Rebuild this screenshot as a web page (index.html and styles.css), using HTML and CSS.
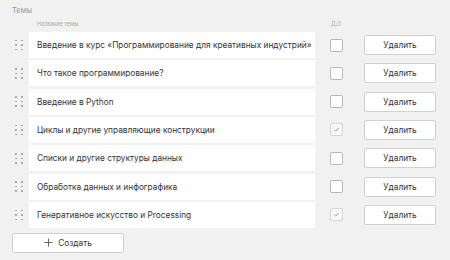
FILE: index.html
```html
<!DOCTYPE html>
<html lang="ru">
<head>
  <meta charset="UTF-8" />
  <title>Темы</title>
  <link rel="stylesheet" href="styles.css">
</head>
<body>
  <div class="topics">
    <div class="section-title">Темы</div>
    <div class="head">
      <span class="head-name">Название темы</span>
      <span class="head-hw">Д/З</span>
    </div>

    <div class="list">
      <div class="row">
        <span class="handle"><i></i><i></i><i></i><i></i><i></i><i></i></span>
        <div class="card">Введение в курс «Программирование для креативных индустрий»</div>
        <div class="hw"><span class="check"></span></div>
        <button class="btn-del">Удалить</button>
      </div>
      <div class="row">
        <span class="handle"><i></i><i></i><i></i><i></i><i></i><i></i></span>
        <div class="card">Что такое программирование?</div>
        <div class="hw"><span class="check"></span></div>
        <button class="btn-del">Удалить</button>
      </div>
      <div class="row">
        <span class="handle"><i></i><i></i><i></i><i></i><i></i><i></i></span>
        <div class="card">Введение в Python</div>
        <div class="hw"><span class="check"></span></div>
        <button class="btn-del">Удалить</button>
      </div>
      <div class="row">
        <span class="handle"><i></i><i></i><i></i><i></i><i></i><i></i></span>
        <div class="card">Циклы и другие управляющие конструкции</div>
        <div class="hw"><span class="check checked"><svg viewBox="0 0 8 8" width="7" height="7"><path d="M1.5 4.3 L3.2 5.8 L6.5 2.2" fill="none" stroke="#9a9a9a" stroke-width="1.1"/></svg></span></div>
        <button class="btn-del">Удалить</button>
      </div>
      <div class="row">
        <span class="handle"><i></i><i></i><i></i><i></i><i></i><i></i></span>
        <div class="card">Списки и другие структуры данных</div>
        <div class="hw"><span class="check"></span></div>
        <button class="btn-del">Удалить</button>
      </div>
      <div class="row">
        <span class="handle"><i></i><i></i><i></i><i></i><i></i><i></i></span>
        <div class="card">Обработка данных и инфографика</div>
        <div class="hw"><span class="check"></span></div>
        <button class="btn-del">Удалить</button>
      </div>
      <div class="row">
        <span class="handle"><i></i><i></i><i></i><i></i><i></i><i></i></span>
        <div class="card">Генеративное искусство и Processing</div>
        <div class="hw"><span class="check checked"><svg viewBox="0 0 8 8" width="7" height="7"><path d="M1.5 4.3 L3.2 5.8 L6.5 2.2" fill="none" stroke="#9a9a9a" stroke-width="1.1"/></svg></span></div>
        <button class="btn-del">Удалить</button>
      </div>
    </div>

    <button class="btn-add"><svg viewBox="0 0 10 10" width="9" height="9"><path d="M5 0.5 V9.5 M0.5 5 H9.5" stroke="#555" stroke-width="1"/></svg>Создать</button>
  </div>
</body>
</html>
```

FILE: styles.css
```css
html, body {
  margin: 0;
  background: #f1f1f1;
}
body {
  font-family: Inter, "Noto Sans", sans-serif;
  color: #333;
}
.topics {
  padding: 5px 0 0 12px;
}
.section-title {
  font-size: 7.5px;
  color: #9a9a9a;
  height: 12px;
  line-height: 12px;
}
.head {
  display: flex;
  font-size: 5.5px;
  color: #aaa;
  height: 15px;
  padding-top: 2px;
  box-sizing: border-box;
  line-height: 10px;
}
.head-name {
  padding-left: 25px;
  width: 294px;
}
.list {
  display: flex;
  flex-direction: column;
  gap: 2.33px;
}
.row {
  display: flex;
  align-items: center;
  height: 26px;
}
.handle {
  width: 17px;
  display: grid;
  grid-template-columns: 2px 2px;
  column-gap: 4px;
  row-gap: 3px;
  padding-left: 3px;
  box-sizing: border-box;
}
.handle i {
  width: 1.6px;
  height: 1.6px;
  border-radius: 50%;
  background: #9c9c9c;
}
.card {
  width: 286px;
  height: 26px;
  line-height: 26px;
  background: #fff;
  padding-left: 8px;
  box-sizing: border-box;
  font-size: 8.3px;
  color: #333;
  white-space: nowrap;
}
.hw {
  width: 49px;
  padding-left: 15px;
  box-sizing: border-box;
  display: flex;
}
.check {
  width: 13px;
  height: 13px;
  box-sizing: border-box;
  border: 1px solid #b9b9b9;
  border-radius: 2px;
  background: #fff;
  display: flex;
  align-items: center;
  justify-content: center;
}
.check.checked {
  border-color: #d6d6d6;
  background: #f7f7f7;
}
.btn-del {
  width: 72px;
  height: 20px;
  background: #fff;
  border: 1px solid #d0d0d0;
  border-radius: 2px;
  font-family: inherit;
  font-size: 8.3px;
  color: #333;
  padding: 0;
}
.btn-add {
  margin-top: 5px;
  width: 112px;
  height: 20px;
  background: #fff;
  border: 1px solid #d0d0d0;
  border-radius: 2px;
  font-family: inherit;
  font-size: 8.3px;
  color: #333;
  display: flex;
  align-items: center;
  justify-content: center;
  gap: 5px;
  padding: 0;
}
```
